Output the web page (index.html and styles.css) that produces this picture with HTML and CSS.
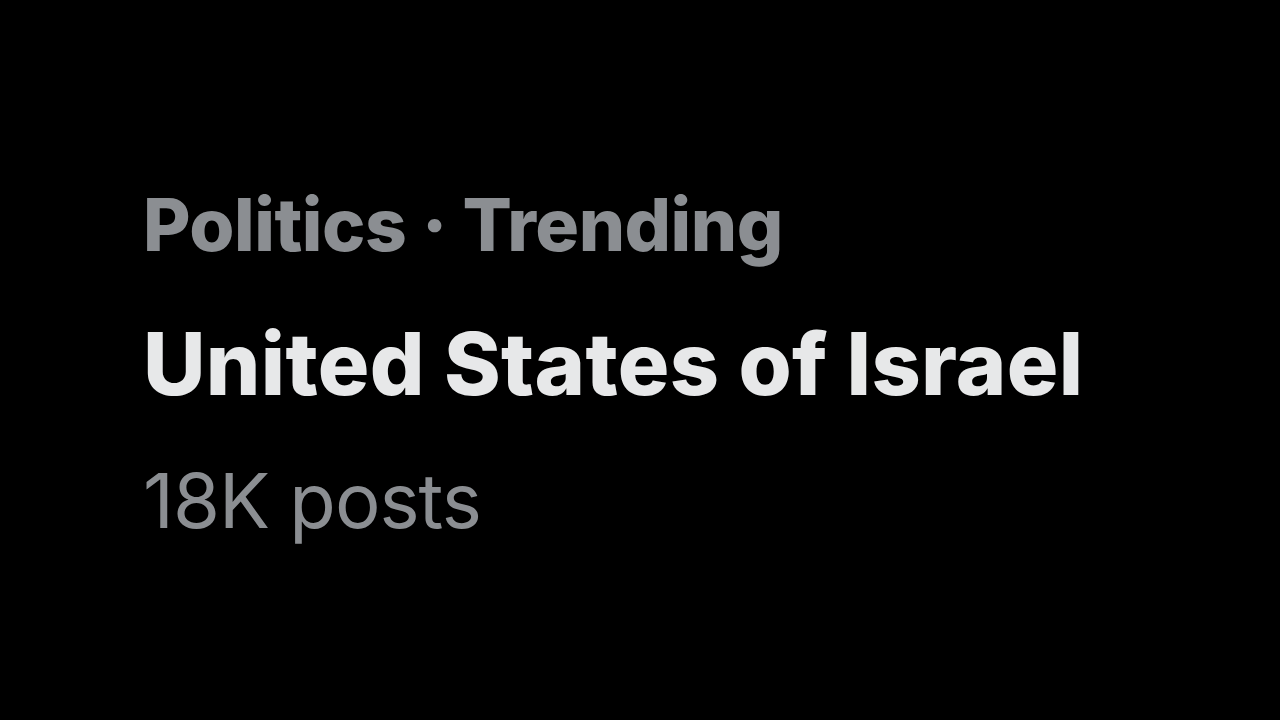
FILE: index.html
```html
<!DOCTYPE html>
<html lang="en">
<head>
<meta charset="utf-8">
<title>Trending</title>
<link rel="stylesheet" href="styles.css">
</head>
<body>
<main class="trend">
  <div class="trend-meta">Politics · Trending</div>
  <div class="trend-title">United States of Israel</div>
  <div class="trend-count">18K posts</div>
</main>
</body>
</html>
```
FILE: styles.css
```css
html, body {
  margin: 0;
  padding: 0;
  background: #000;
  width: 1280px;
  height: 720px;
  overflow: hidden;
}
.trend {
  display: flex;
  flex-direction: column;
  padding: 188px 0 0 143px;
  font-family: Inter, "Noto Sans", sans-serif;
}
.trend-meta {
  font-size: 73px;
  line-height: 73px;
  font-weight: 800;
  color: #8b8e92;
  letter-spacing: -0.5px;
}
.trend-title {
  margin-top: 60px;
  font-size: 86px;
  line-height: 86px;
  font-weight: 800;
  color: #e7e8e9;
  letter-spacing: 0.3px;
}
.trend-count {
  margin-top: 55px;
  font-size: 76px;
  line-height: 76px;
  font-weight: 400;
  color: #8b8e92;
  letter-spacing: -1px;
}
```
